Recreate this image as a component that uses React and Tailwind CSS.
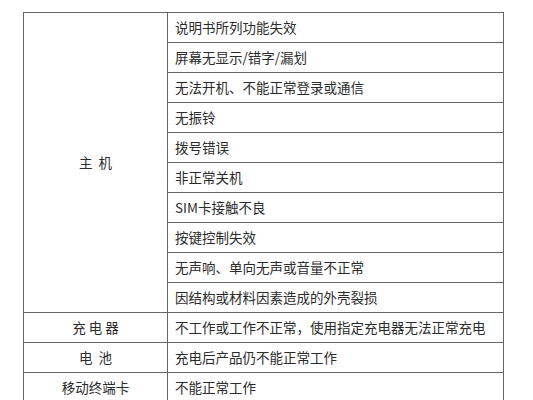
import React from "react";

const hostIssues = [
  "说明书所列功能失效",
  "屏幕无显示/错字/漏划",
  "无法开机、不能正常登录或通信",
  "无振铃",
  "拨号错误",
  "非正常关机",
  "SIM卡接触不良",
  "按键控制失效",
  "无声响、单向无声或音量不正常",
  "因结构或材料因素造成的外壳裂损",
];

const otherRows = [
  { part: "充 电 器", issue: "不工作或工作不正常，使用指定充电器无法正常充电" },
  { part: "电\u00a0\u00a0池", issue: "充电后产品仍不能正常工作" },
  { part: "移动终端卡", issue: "不能正常工作" },
];

const cell = "border border-[#666] h-[30px] p-0";

const App = () => {
  return (
    <div
      className="w-[533px] h-[400px] overflow-hidden bg-white pl-[23px] pt-[12px] text-[13.5px] text-[#2b2b2b]"
      style={{ fontFamily: '"Noto Sans CJK SC", "Noto Sans", sans-serif' }}
    >
      <table className="w-[481px] border-collapse table-fixed">
        <colgroup>
          <col className="w-[144px]" />
          <col />
        </colgroup>
        <tbody>
          {hostIssues.map((issue, i) => (
            <tr key={issue} className="h-[30px]">
              {i === 0 && (
                <td rowSpan={hostIssues.length} className={cell + " text-center align-middle"}>
                  主&nbsp;&nbsp;机
                </td>
              )}
              <td className={cell + " pl-[7px] align-middle leading-none"}>{issue}</td>
            </tr>
          ))}
          {otherRows.map((row) => (
            <tr key={row.issue} className="h-[30px]">
              <td className={cell + " text-center align-middle leading-none"}>{row.part}</td>
              <td className={cell + " pl-[7px] align-middle leading-none"}>{row.issue}</td>
            </tr>
          ))}
        </tbody>
      </table>
    </div>
  );
};

export default App;
